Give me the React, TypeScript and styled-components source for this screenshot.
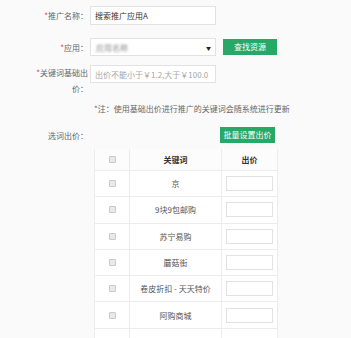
import styled, { createGlobalStyle } from 'styled-components'

const keywords = ['京', '9块9包邮购', '苏宁易购', '蘑菇街', '卷皮折扣 - 天天特价', '阿购商城']

const App = () => {
    return (
        <>
            <GlobalStyle />
            <StyledForm>
                <FormRow>
                    <StyledLabel><Star>*</Star>推广名称：</StyledLabel>
                    <TextInput defaultValue="搜索推广应用A" />
                </FormRow>
                <FormRow $top={13}>
                    <StyledLabel><Star>*</Star>应用：</StyledLabel>
                    <Inline>
                        <SelectBox>
                            <Blurred>应用名称</Blurred>
                            <Arrow>▼</Arrow>
                        </SelectBox>
                        <GreenButton $width={54}>查找资源</GreenButton>
                    </Inline>
                </FormRow>
                <FormRow $top={9}>
                    <StyledLabel $wrap><Star>*</Star>关键词基础出价：</StyledLabel>
                    <TextInput $dim placeholder="出价不能小于￥1.2,大于￥100.0" />
                </FormRow>
                <StyledNote>*注：使用基础出价进行推广的关键词会随系统进行更新</StyledNote>
                <FormRow $top={9} $center>
                    <StyledLabel>选词出价：</StyledLabel>
                    <BatchBar>
                        <GreenButton $width={55}>批量设置出价</GreenButton>
                    </BatchBar>
                </FormRow>
                <StyledTable>
                    <colgroup>
                        <col style={{ width: 35 }} />
                        <col style={{ width: 92 }} />
                        <col style={{ width: 56 }} />
                    </colgroup>
                    <thead>
                        <tr>
                            <HeadCell><Check type="checkbox" /></HeadCell>
                            <HeadCell>关键词</HeadCell>
                            <HeadCell>出价</HeadCell>
                        </tr>
                    </thead>
                    <tbody>
                        {keywords.map((kw, idx) => (
                            <BodyRow key={idx}>
                                <Cell><Check type="checkbox" /></Cell>
                                <Cell>{kw}</Cell>
                                <Cell><PriceInput /></Cell>
                            </BodyRow>
                        ))}
                        {/* next row only starts at the bottom edge */}
                        <BodyRow>
                            <Cell />
                            <Cell />
                            <Cell />
                        </BodyRow>
                    </tbody>
                </StyledTable>
            </StyledForm>
        </>
    )
}

export default App

const GlobalStyle = createGlobalStyle`
html, body {
  margin: 0;
  padding: 0;
  background: #fafafa;
  overflow: hidden;
}
body {
  font-family: "Noto Sans CJK SC", "Noto Sans", "Liberation Sans", sans-serif;
  font-size: 8px;
  color: #666;
}
`

const StyledForm = styled.div`
padding-top: 6px;
width: 351px;
`

const FormRow = styled.div<{ $top?: number; $center?: boolean }>`
display: grid;
grid-template-columns: 90px 1fr;
align-items: ${({ $center }) => ($center ? 'center' : 'start')};
margin-top: ${({ $top }) => $top ?? 0}px;
`

const StyledLabel = styled.label<{ $wrap?: boolean }>`
justify-self: end;
width: ${({ $wrap }) => ($wrap ? '56px' : 'auto')};
padding-right: 2px;
text-align: right;
line-height: 16px;
padding-top: ${({ $wrap }) => ($wrap ? '0' : '2px')};
color: #666;
`

const Star = styled.span`
color: #e4393c;
`

const TextInput = styled.input<{ $dim?: boolean }>`
box-sizing: border-box;
width: 126px;
height: ${({ $dim }) => ($dim ? '18px' : '19px')};
padding: 0 4px;
border: 1px solid #e2e2e2;
background: #fff;
font: inherit;
font-size: 8px;
color: #333;
outline: none;
&::placeholder {
  color: #a5a5a5;
}
`

const Inline = styled.div`
display: flex;
align-items: center;
gap: 7px;
`

const SelectBox = styled.div`
box-sizing: border-box;
width: 126px;
height: 18px;
padding: 0 4px 0 5px;
display: flex;
align-items: center;
justify-content: space-between;
border: 1px solid #e2e2e2;
background: #fff;
`

const Blurred = styled.span`
color: #888;
filter: blur(1.3px);
`

const Arrow = styled.span`
font-size: 5px;
color: #222;
`

const GreenButton = styled.button<{ $width: number }>`
box-sizing: border-box;
width: ${({ $width }) => $width}px;
height: 16px;
padding: 0;
border: none;
background: #27a866;
color: #fff;
font: inherit;
font-size: 8px;
line-height: 16px;
text-align: center;
`

const StyledNote = styled.div`
margin-top: 4px;
padding-left: 94px;
line-height: 16px;
color: #666;
`

const BatchBar = styled.div`
width: 185px;
display: flex;
justify-content: flex-end;
`

const StyledTable = styled.table`
margin: 5px 0 0 94px;
width: 183px;
table-layout: fixed;
border-collapse: collapse;
background: #fff;
`

const HeadCell = styled.th`
height: 21px;
padding: 0;
border: 1px solid #ececec;
border-top: none;
background: #fcfcfc;
color: #333;
font-weight: 700;
font-size: 8px;
text-align: center;
vertical-align: middle;
`

const BodyRow = styled.tr`
height: 26.3px;
`

const Cell = styled.td`
padding: 0;
border: 1px solid #ececec;
color: #555;
text-align: center;
vertical-align: middle;
`

const Check = styled.input`
appearance: none;
display: block;
margin: 0 auto;
width: 7px;
height: 7px;
border: 1px solid #c9c9c9;
border-radius: 1px;
background: #e9e9e9;
box-sizing: border-box;
`

const PriceInput = styled.input`
box-sizing: border-box;
display: block;
margin: 0 auto;
width: 47px;
height: 15px;
border: 1px solid #e2e2e2;
background: #fff;
outline: none;
`
